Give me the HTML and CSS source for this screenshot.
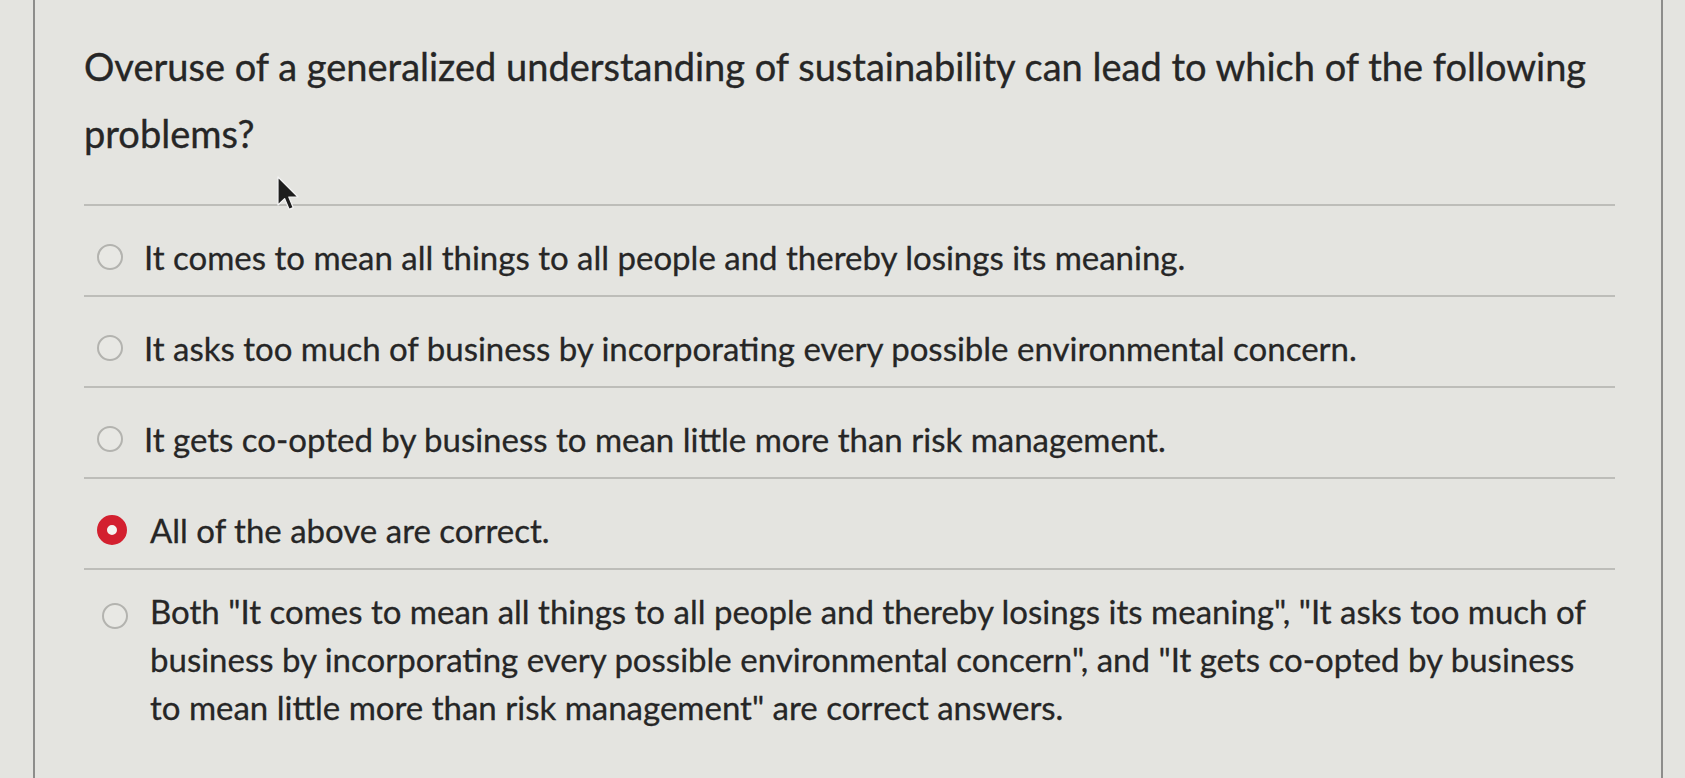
FILE: index.html
```html
<!DOCTYPE html>
<html lang="en">
<head>
<meta charset="utf-8">
<title>Question</title>
<link rel="stylesheet" href="styles.css">
</head>
<body>
<div class="page">
  <div class="question">
    <p class="prompt">Overuse of a generalized understanding of sustainability can lead to which of the following problems?</p>
    <ul class="options">
      <li class="option"><span class="radio"></span><span class="label">It comes to mean all things to all people and thereby losings its meaning.</span></li>
      <li class="option"><span class="radio"></span><span class="label">It asks too much of business by incorporating every possible environmental concern.</span></li>
      <li class="option"><span class="radio"></span><span class="label">It gets co-opted by business to mean little more than risk management.</span></li>
      <li class="option selected"><span class="radio"></span><span class="label">All of the above are correct.</span></li>
      <li class="option multi"><span class="radio"></span><span class="label">Both "It comes to mean all things to all people and thereby losings its meaning", "It asks too much of business by incorporating every possible environmental concern", and "It gets co-opted by business to mean little more than risk management" are correct answers.</span></li>
    </ul>
  </div>
  <svg class="cursor" width="24" height="38" viewBox="0 0 12 19" aria-hidden="true">
    <path d="M1 1 L1 15 L4.3 11.8 L6.6 17.2 L8.6 16.3 L6.4 11 L11 11 Z" fill="#1e1e1e" stroke="#f4f4f4" stroke-width="0.6" stroke-linejoin="round"/>
  </svg>
</div>
</body>
</html>
```

FILE: styles.css
```css
html, body {
  margin: 0;
  padding: 0;
}

body {
  background: #e4e4e0;
  font-family: Lato, "Open Sans", "Liberation Sans", sans-serif;
  color: #262626;
  width: 1685px;
  height: 778px;
  overflow: hidden;
}

.page {
  position: relative;
  margin-left: 33px;
  width: 1630px;
  height: 778px;
  border-left: 2px solid #8d8d8b;
  border-right: 2px solid #8d8d8b;
  box-sizing: border-box;
  padding: 33px 46px 0 49px;
}

.prompt {
  margin: 0;
  font-size: 38px;
  line-height: 67px;
  color: #262626;
  -webkit-text-stroke: 0.35px #262626;
  max-width: 1535px;
}

.options {
  list-style: none;
  margin: 37px 0 0;
  padding: 0;
}

.option {
  display: flex;
  align-items: center;
  border-top: 2px solid #bdbdb9;
  padding: 31px 0 18px 13px;
  font-size: 33px;
  line-height: 40px;
  -webkit-text-stroke: 0.3px #262626;
}

.option .label {
  margin-left: 21px;
}

.radio {
  flex: none;
  width: 26px;
  height: 26px;
  border: 2px solid #b3b3af;
  border-radius: 50%;
  box-sizing: border-box;
  background: #e8e8e4;
}

.selected .radio {
  width: 30px;
  height: 30px;
  border: 10px solid #d3202f;
  background: #f4f4f0;
  margin-left: 0;
}

.selected .label {
  margin-left: 23px;
}

.multi {
  align-items: flex-start;
  padding-top: 17px;
  line-height: 48px;
}

.multi .radio {
  margin-top: 16px;
  margin-left: 5px;
}

.multi .label {
  margin-left: 22px;
  max-width: 1450px;
}

.cursor {
  position: absolute;
  left: 241px;
  top: 175px;
}
```
